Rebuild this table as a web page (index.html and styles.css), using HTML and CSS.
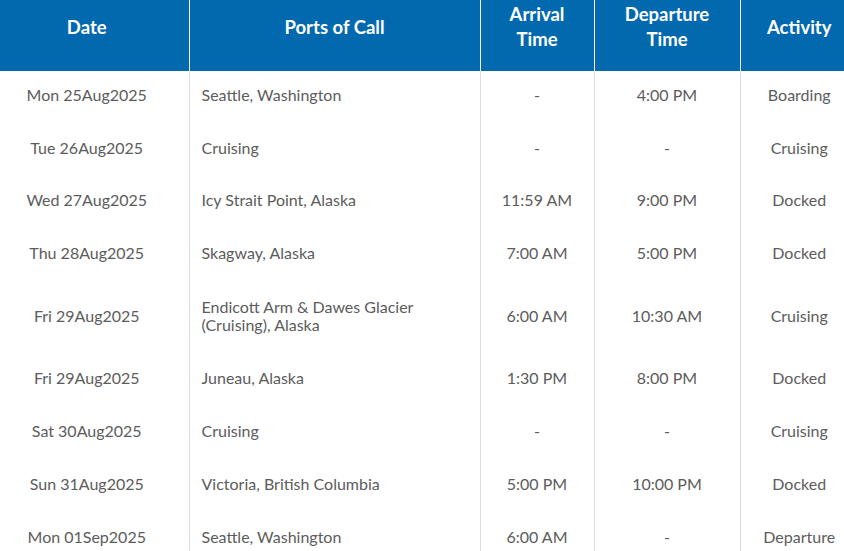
FILE: index.html
```html
<!DOCTYPE html>
<html>
<head>
<meta charset="utf-8">
<link rel="stylesheet" href="styles.css">
</head>
<body>
<table class="itin">
  <colgroup>
    <col class="c-date"><col class="c-port"><col class="c-arr"><col class="c-dep"><col class="c-act">
  </colgroup>
  <thead>
    <tr>
      <th class="date">Date</th>
      <th>Ports of Call</th>
      <th>Arrival<br>Time</th>
      <th>Departure<br>Time</th>
      <th class="act">Activity</th>
    </tr>
  </thead>
  <tbody>
    <tr><td class="date">Mon 25Aug2025</td><td class="port">Seattle, Washington</td><td>-</td><td>4:00 PM</td><td class="act">Boarding</td></tr>
    <tr><td class="date">Tue 26Aug2025</td><td class="port">Cruising</td><td>-</td><td>-</td><td class="act">Cruising</td></tr>
    <tr><td class="date">Wed 27Aug2025</td><td class="port">Icy Strait Point, Alaska</td><td>11:59 AM</td><td>9:00 PM</td><td class="act">Docked</td></tr>
    <tr><td class="date">Thu 28Aug2025</td><td class="port">Skagway, Alaska</td><td>7:00 AM</td><td>5:00 PM</td><td class="act">Docked</td></tr>
    <tr><td class="date">Fri 29Aug2025</td><td class="port port-wrap">Endicott Arm &amp; Dawes Glacier<br>(Cruising), Alaska</td><td>6:00 AM</td><td>10:30 AM</td><td class="act">Cruising</td></tr>
    <tr><td class="date">Fri 29Aug2025</td><td class="port">Juneau, Alaska</td><td>1:30 PM</td><td>8:00 PM</td><td class="act">Docked</td></tr>
    <tr><td class="date">Sat 30Aug2025</td><td class="port">Cruising</td><td>-</td><td>-</td><td class="act">Cruising</td></tr>
    <tr><td class="date">Sun 31Aug2025</td><td class="port">Victoria, British Columbia</td><td>5:00 PM</td><td>10:00 PM</td><td class="act">Docked</td></tr>
    <tr><td class="date">Mon 01Sep2025</td><td class="port">Seattle, Washington</td><td>6:00 AM</td><td>-</td><td class="act">Departure</td></tr>
  </tbody>
</table>
</body>
</html>
```
FILE: styles.css
```css
html, body {
  margin: 0;
  padding: 0;
  background: #fff;
}
body {
  font-family: Lato, "Open Sans", sans-serif;
  width: 844px;
  overflow: hidden;
}
.itin {
  width: 844px;
  border-collapse: collapse;
  table-layout: fixed;
}
.c-date { width: 189px; }
.c-port { width: 291px; }
.c-arr { width: 114px; }
.c-dep { width: 146px; }
.c-act { width: 104px; }
.itin th {
  background: #0369ae;
  color: #fff;
  font-weight: bold;
  font-size: 18.5px;
  line-height: 25px;
  height: 71px;
  box-sizing: border-box;
  padding: 2px 4px 19px;
  text-align: center;
  vertical-align: middle;
  border-left: 1px solid #fff;
}
.itin th:first-child, .itin td:first-child { border-left: none; }
.itin td {
  color: #5c5c5c;
  font-size: 16px;
  line-height: 18px;
  padding: 14.8px 6px 20px;
  text-align: center;
  vertical-align: middle;
  border-left: 1px solid #dcdcdc;
}
.itin .date { padding-left: 0; padding-right: 15px; }
.itin .act { padding-left: 14px; padding-right: 0; }
.itin td.port { text-align: left; padding-left: 12px; }
.itin td.port-wrap { padding-top: 16px; padding-bottom: 20.2px; }
```
